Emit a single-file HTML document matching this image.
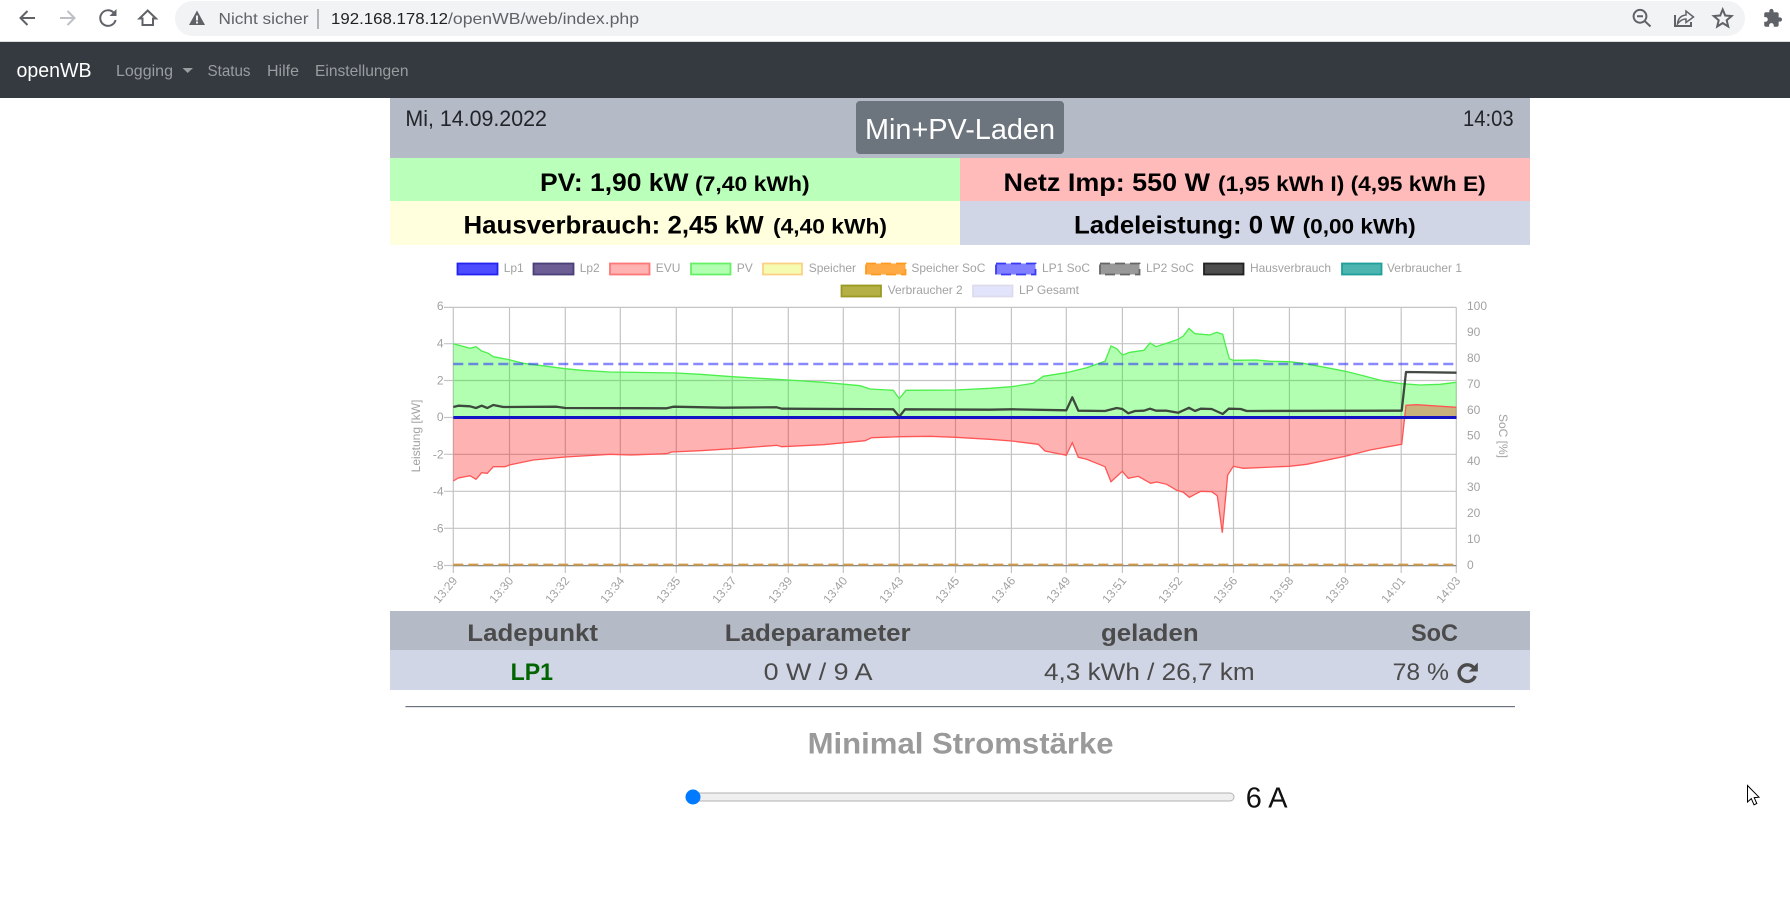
<!DOCTYPE html>
<html lang="de">
<head>
<meta charset="utf-8">
<title>openWB</title>
<style>
html,body{margin:0;padding:0;width:1790px;height:903px;overflow:hidden;background:#fff}
svg{position:absolute;left:0;top:0;display:block}
text{font-family:"Liberation Sans",Arial,sans-serif;white-space:pre}
.nav{font-size:16px;fill:#9a9da0}
.t{font-size:12px;fill:#a2a2a2}
.b{font-weight:bold;fill:#000}
.h{font-weight:bold;font-size:24px;fill:#4b4b4b}
.r{font-size:24px;fill:#4b4b4b}
</style>
</head>
<body>
<svg width="1790" height="903" viewBox="0 0 1790 903" xmlns="http://www.w3.org/2000/svg">
<!-- browser toolbar -->
<rect x="0" y="41" width="1790" height="1" fill="#dadce0"/>
<rect x="175" y="1" width="1570" height="35" rx="17.5" fill="#f1f3f4"/>
<g fill="none" stroke="#5f6368" stroke-width="2">
<path d="M35 18H21M27.5 11L20.5 18L27.5 25"/>
<path stroke="#bdc1c6" d="M60 18H74M67.5 11L74.5 18L67.5 25"/>
<path d="M113.5 12.5A7.8 7.8 0 1 0 115.6 20"/>
<path d="M147.7 10.5L139.5 18.5H142.5V25H153V18.5H156Z"/>
<circle cx="1640" cy="16.3" r="6.4"/>
<path d="M1637 16.3H1643M1645 21.3L1650.5 26.5"/>
<path d="M1675 15V26H1691V22"/>
<path stroke-width="1.5" d="M1677.5 24C1678 18.5 1681 15.5 1686 15V11L1693.5 17L1686 22.5V19C1682.5 19 1680 20.5 1677.5 24Z"/>
<path d="M1722.7 9.5L1725.2 15.5L1731.6 16L1726.7 20.2L1728.2 26.5L1722.7 23.1L1717.2 26.5L1718.7 20.2L1713.8 16L1720.2 15.5Z"/>
</g>
<path d="M116.5 9V16H109.5Z" fill="#5f6368"/>
<path d="M197 10.5L189 25H205Z" fill="#5f6368"/>
<rect x="196" y="15.5" width="2" height="5" fill="#f1f3f4"/><rect x="196" y="21.5" width="2" height="2" fill="#f1f3f4"/>
<path transform="translate(1762.5 8) scale(.85)" fill="#5f6368" d="M20.5 11H19V7c0-1.1-.9-2-2-2h-4V3.5C13 2.12 11.88 1 10.5 1S8 2.12 8 3.5V5H4c-1.1 0-1.99.9-1.99 2v3.8H3.5c1.49 0 2.7 1.21 2.7 2.7s-1.21 2.7-2.7 2.7H2V20c0 1.1.9 2 2 2h3.8v-1.5c0-1.49 1.21-2.7 2.7-2.7 1.49 0 2.7 1.21 2.7 2.7V22H17c1.1 0 2-.9 2-2v-4h1.5c1.38 0 2.5-1.12 2.5-2.5S21.88 11 20.5 11z"/>
<text x="218.5" y="24" font-size="16" fill="#5f6368" textLength="90" lengthAdjust="spacingAndGlyphs">Nicht sicher</text>
<rect x="317.5" y="9" width="1" height="20" fill="#70757a"/>
<text x="331" y="24" font-size="16" fill="#202124" textLength="117" lengthAdjust="spacingAndGlyphs">192.168.178.12</text>
<text x="448" y="24" font-size="16" fill="#5f6368" textLength="191" lengthAdjust="spacingAndGlyphs">/openWB/web/index.php</text>

<!-- navbar -->
<rect x="0" y="42" width="1790" height="56" fill="#343a40"/>
<text x="16.5" y="77" font-size="20" fill="#fff" textLength="75" lengthAdjust="spacingAndGlyphs">openWB</text>
<text class="nav" x="116" y="76" textLength="57" lengthAdjust="spacingAndGlyphs">Logging</text>
<path d="M182.5 68H193L187.7 73Z" fill="#9a9da0"/>
<text class="nav" x="207.5" y="76" textLength="43" lengthAdjust="spacingAndGlyphs">Status</text>
<text class="nav" x="267" y="76" textLength="32" lengthAdjust="spacingAndGlyphs">Hilfe</text>
<text class="nav" x="315" y="76" textLength="93.5" lengthAdjust="spacingAndGlyphs">Einstellungen</text>

<!-- header -->
<rect x="390" y="98" width="1140" height="60" fill="#b5bac7"/>
<text x="405.4" y="126" font-size="22" fill="#212529" textLength="141.5" lengthAdjust="spacingAndGlyphs">Mi, 14.09.2022</text>
<text x="1463" y="126" font-size="22" fill="#212529" textLength="50.7" lengthAdjust="spacingAndGlyphs">14:03</text>
<rect x="856" y="101" width="208" height="53" rx="4" fill="#6c757d"/>
<text x="865" y="139" font-size="29" fill="#fff" textLength="190" lengthAdjust="spacingAndGlyphs">Min+PV-Laden</text>

<!-- power tiles -->
<rect x="390" y="158" width="570" height="43" fill="#baffba"/>
<rect x="960" y="158" width="570" height="43" fill="#ffbaba"/>
<rect x="390" y="201" width="570" height="44" fill="#ffffdd"/>
<rect x="960" y="201" width="570" height="44" fill="#d0d6e5"/>
<text class="b" x="540" y="191" font-size="25" textLength="148.5" lengthAdjust="spacingAndGlyphs">PV: 1,90 kW</text>
<text class="b" x="695" y="191" font-size="21" textLength="114.6" lengthAdjust="spacingAndGlyphs">(7,40 kWh)</text>
<text class="b" x="1003.5" y="191" font-size="25" textLength="206.5" lengthAdjust="spacingAndGlyphs">Netz Imp: 550 W</text>
<text class="b" x="1218" y="191" font-size="21" textLength="267.7" lengthAdjust="spacingAndGlyphs">(1,95 kWh I) (4,95 kWh E)</text>
<text class="b" x="463.5" y="233.5" font-size="25" textLength="300.2" lengthAdjust="spacingAndGlyphs">Hausverbrauch: 2,45 kW</text>
<text class="b" x="773" y="233.5" font-size="21" textLength="114" lengthAdjust="spacingAndGlyphs">(4,40 kWh)</text>
<text class="b" x="1074" y="233.5" font-size="25" textLength="220.6" lengthAdjust="spacingAndGlyphs">Ladeleistung: 0 W</text>
<text class="b" x="1302.6" y="233.5" font-size="21" textLength="113.1" lengthAdjust="spacingAndGlyphs">(0,00 kWh)</text>

<!-- legend -->
<g stroke-width="1.8">
<rect x="457.5" y="263.5" width="40" height="11" fill="#4d4dff" stroke="#2323f0"/>
<rect x="533.5" y="263.5" width="40" height="11" fill="#6c5d94" stroke="#4a3f78"/>
<rect x="610" y="263.5" width="39.5" height="11" fill="#ffb2b2" stroke="#f77"/>
<rect x="691" y="263.5" width="39.5" height="11" fill="#b2ffb2" stroke="#66f066"/>
<rect x="763" y="263.5" width="39" height="11" fill="#f6fbb2" stroke="#fbd184"/>
<rect x="866" y="263.5" width="39.5" height="11" fill="#ffaa44" stroke="#ff9a1e" stroke-dasharray="10 5"/>
<rect x="996" y="263.5" width="39.5" height="11" fill="#7f7fff" stroke="#3a3af5" stroke-dasharray="10 5"/>
<rect x="1100" y="263.5" width="39.5" height="11" fill="#999" stroke="#666" stroke-dasharray="10 5"/>
<rect x="1204" y="263.5" width="39.5" height="11" fill="#4d4d4d" stroke="#222"/>
<rect x="1342" y="263.5" width="39.5" height="11" fill="#4db5b0" stroke="#1fa09a"/>
<rect x="841.5" y="285.5" width="39.5" height="11" fill="#b5b045" stroke="#9a9a22"/>
<rect x="973" y="285.5" width="39.5" height="11" fill="#e2e4fb" stroke="#dcdcec"/>
</g>
<g class="t">
<text class="t" x="503.7" y="272">Lp1</text>
<text class="t" x="579.7" y="272">Lp2</text>
<text class="t" x="655.7" y="272">EVU</text>
<text class="t" x="736.7" y="272">PV</text>
<text class="t" x="808.7" y="272">Speicher</text>
<text class="t" x="911.4" y="272" textLength="74" lengthAdjust="spacingAndGlyphs">Speicher SoC</text>
<text class="t" x="1042" y="272" textLength="48" lengthAdjust="spacingAndGlyphs">LP1 SoC</text>
<text class="t" x="1146" y="272" textLength="48" lengthAdjust="spacingAndGlyphs">LP2 SoC</text>
<text class="t" x="1250" y="272" textLength="81" lengthAdjust="spacingAndGlyphs">Hausverbrauch</text>
<text class="t" x="1387" y="272" textLength="75" lengthAdjust="spacingAndGlyphs">Verbraucher 1</text>
<text class="t" x="887.7" y="294" textLength="75" lengthAdjust="spacingAndGlyphs">Verbraucher 2</text>
<text class="t" x="1019" y="294" textLength="60" lengthAdjust="spacingAndGlyphs">LP Gesamt</text>
</g>

<!-- grid -->
<g stroke="#c4c4c4" stroke-width="1.2" fill="none">
<path d="M444 307.4H1456.3M444 343.7H1456.3M444 380.5H1456.3M444 417.5H1456.3M444 454.3H1456.3M444 491.3H1456.3M444 528.3H1456.3M444 565.5H1456.3"/>
<path d="M453.3 307.4V573M509.5 307.4V573M565.3 307.4V573M620.3 307.4V573M676.3 307.4V573M732.3 307.4V573M788.3 307.4V573M843.3 307.4V573M899.3 307.4V573M955.5 307.4V573M1011.4 307.4V573M1066.3 307.4V573M1122.4 307.4V573M1178.4 307.4V573M1233.5 307.4V573M1289.4 307.4V573M1345.3 307.4V573M1401.2 307.4V573M1456.3 307.4V573"/>
</g>

<!-- axis labels -->
<g class="t" text-anchor="end">
<text class="t" x="443.5" y="310">6</text>
<text class="t" x="443.5" y="347.5">4</text>
<text class="t" x="443.5" y="384.5">2</text>
<text class="t" x="443.5" y="421">0</text>
<text class="t" x="443.5" y="458.5">-2</text>
<text class="t" x="443.5" y="495.5">-4</text>
<text class="t" x="443.5" y="532.5">-6</text>
<text class="t" x="443.5" y="569.5">-8</text>
</g>
<g>
<text class="t" x="1467" y="310">100</text>
<text class="t" x="1467" y="336">90</text>
<text class="t" x="1467" y="362">80</text>
<text class="t" x="1467" y="388">70</text>
<text class="t" x="1467" y="414">60</text>
<text class="t" x="1467" y="439.5">50</text>
<text class="t" x="1467" y="465">40</text>
<text class="t" x="1467" y="491">30</text>
<text class="t" x="1467" y="517">20</text>
<text class="t" x="1467" y="543">10</text>
<text class="t" x="1467" y="569">0</text>
</g>
<text class="t" text-anchor="middle" transform="translate(420 436) rotate(-90)">Leistung [kW]</text>
<text class="t" text-anchor="middle" transform="translate(1499 436) rotate(90)">SoC [%]</text>
<g text-anchor="end">
<text class="t" transform="translate(458 581) rotate(-50)">13:29</text>
<text class="t" transform="translate(514 581) rotate(-50)">13:30</text>
<text class="t" transform="translate(570 581) rotate(-50)">13:32</text>
<text class="t" transform="translate(625 581) rotate(-50)">13:34</text>
<text class="t" transform="translate(681 581) rotate(-50)">13:35</text>
<text class="t" transform="translate(737 581) rotate(-50)">13:37</text>
<text class="t" transform="translate(793 581) rotate(-50)">13:39</text>
<text class="t" transform="translate(848 581) rotate(-50)">13:40</text>
<text class="t" transform="translate(904 581) rotate(-50)">13:43</text>
<text class="t" transform="translate(960 581) rotate(-50)">13:45</text>
<text class="t" transform="translate(1016 581) rotate(-50)">13:46</text>
<text class="t" transform="translate(1071 581) rotate(-50)">13:49</text>
<text class="t" transform="translate(1127 581) rotate(-50)">13:51</text>
<text class="t" transform="translate(1183 581) rotate(-50)">13:52</text>
<text class="t" transform="translate(1238 581) rotate(-50)">13:56</text>
<text class="t" transform="translate(1294 581) rotate(-50)">13:58</text>
<text class="t" transform="translate(1350 581) rotate(-50)">13:59</text>
<text class="t" transform="translate(1406 581) rotate(-50)">14:01</text>
<text class="t" transform="translate(1461 581) rotate(-50)">14:03</text>
</g>

<!-- chart data -->
<polygon fill="rgba(0,255,0,.3)" points="453.3,417.5 453.3,343.7 470,348.3 476,346.7 481.7,351 488.3,353.3 493.3,356.7 509.3,359.7 523.3,363.3 546.7,366.3 565.3,368.7 581.7,370.3 610,372 676.3,373 700,374.3 732.3,376.7 788.3,380 823.3,382.3 860,385.7 870,389 893.3,390.3 899.3,398.7 906,390.3 955.7,390 990,388.3 1011.7,386.7 1033.3,383.3 1043.3,376.3 1066.3,372.7 1086.7,367.7 1105,361.3 1111,346 1116.7,348.7 1122.3,355 1130,352.3 1144,350.3 1150,343 1156,346.7 1166.7,343.3 1178.3,339.2 1183.3,336 1189,328.5 1195,333.7 1210,335 1216.7,332.3 1222.7,334.3 1225,343.3 1229.3,358.7 1233.3,360.3 1256.7,360 1270,361.3 1289.3,361.7 1303.3,363.3 1330,368.3 1345.3,371.3 1363.3,375.7 1383.3,381 1401.7,383.7 1420,385 1440,384.3 1456.5,382.3 1456.5,417.5"/>
<polyline fill="none" stroke="#4aef4a" stroke-width="1.3" points="453.3,343.7 470,348.3 476,346.7 481.7,351 488.3,353.3 493.3,356.7 509.3,359.7 523.3,363.3 546.7,366.3 565.3,368.7 581.7,370.3 610,372 676.3,373 700,374.3 732.3,376.7 788.3,380 823.3,382.3 860,385.7 870,389 893.3,390.3 899.3,398.7 906,390.3 955.7,390 990,388.3 1011.7,386.7 1033.3,383.3 1043.3,376.3 1066.3,372.7 1086.7,367.7 1105,361.3 1111,346 1116.7,348.7 1122.3,355 1130,352.3 1144,350.3 1150,343 1156,346.7 1166.7,343.3 1178.3,339.2 1183.3,336 1189,328.5 1195,333.7 1210,335 1216.7,332.3 1222.7,334.3 1225,343.3 1229.3,358.7 1233.3,360.3 1256.7,360 1270,361.3 1289.3,361.7 1303.3,363.3 1330,368.3 1345.3,371.3 1363.3,375.7 1383.3,381 1401.7,383.7 1420,385 1440,384.3 1456.5,382.3"/>
<polygon fill="rgba(255,0,0,.3)" points="453.3,417.5 453.3,481 458.3,478 470,475.7 476,479.3 481.7,472.7 487.3,473.3 493.3,466.7 505,466.7 509.3,465 533.3,460 565.3,457 610,454.3 630,455 666.7,453.7 671.7,452 700,450.7 732.3,448.7 776.7,445.3 781.7,446.7 823.3,444.7 865,440.7 871.7,437.7 900,436.7 930,436.3 955.7,437.3 990,439.3 1011.7,441 1038.3,444.3 1045,451 1066.3,455.3 1072.3,442.7 1078.3,457.3 1086.7,459.3 1105,466.7 1111,481.7 1122.3,471.3 1128.3,478.3 1138.3,476.3 1150.7,483.3 1156.7,482 1166.7,484.3 1176.7,490.3 1183.3,492.2 1189.3,497.3 1200.7,491.3 1211.7,491.7 1217.3,495.7 1222.3,532.7 1227.7,475 1233.3,466.3 1243.3,468.3 1289.3,466.3 1306.7,464.3 1345.3,456.3 1370,450 1401.7,444.3 1406,405.3 1416.7,404.7 1456.5,407.3 1456.5,417.5"/>
<polyline fill="none" stroke="#f55" stroke-width="1.3" points="453.3,481 458.3,478 470,475.7 476,479.3 481.7,472.7 487.3,473.3 493.3,466.7 505,466.7 509.3,465 533.3,460 565.3,457 610,454.3 630,455 666.7,453.7 671.7,452 700,450.7 732.3,448.7 776.7,445.3 781.7,446.7 823.3,444.7 865,440.7 871.7,437.7 900,436.7 930,436.3 955.7,437.3 990,439.3 1011.7,441 1038.3,444.3 1045,451 1066.3,455.3 1072.3,442.7 1078.3,457.3 1086.7,459.3 1105,466.7 1111,481.7 1122.3,471.3 1128.3,478.3 1138.3,476.3 1150.7,483.3 1156.7,482 1166.7,484.3 1176.7,490.3 1183.3,492.2 1189.3,497.3 1200.7,491.3 1211.7,491.7 1217.3,495.7 1222.3,532.7 1227.7,475 1233.3,466.3 1243.3,468.3 1289.3,466.3 1306.7,464.3 1345.3,456.3 1370,450 1401.7,444.3 1406,405.3 1416.7,404.7 1456.5,407.3"/>
<line x1="453.3" y1="364" x2="1456.3" y2="364" stroke="rgba(40,40,255,.55)" stroke-width="2.4" stroke-dasharray="10 5"/>
<line x1="453.3" y1="565.7" x2="1456.3" y2="565.7" stroke="#808080" stroke-width="1.2"/>
<line x1="453.3" y1="564.6" x2="1456.3" y2="564.6" stroke="#d09a48" stroke-width="2" stroke-dasharray="10 5"/>
<polyline fill="none" stroke="#333a33" stroke-opacity=".92" stroke-width="2.3" stroke-linejoin="round" points="453.3,407 458.3,405.7 470,406.3 476,408 481.7,405.7 487.3,408 493.3,405 503.3,407 556.7,406.7 565.3,408 666.7,408.3 673.3,406.7 723,407.7 776.7,407.3 781.7,408.7 893.3,409.3 899.3,416.7 905,409.3 990,409.7 1011.7,409.3 1066.3,410.3 1072.3,397.3 1078.3,410.7 1105,411 1116.7,408 1122.3,409 1128.3,413.3 1135,411 1144,410.7 1150,408.7 1156,410.7 1166.7,410.7 1178.3,412.7 1189,407.8 1195,411 1200.7,408.7 1211.7,409 1222.7,414 1228.7,408.7 1240.7,409 1246.7,411 1401.7,410.7 1406,372 1456.5,372.7"/>
<line x1="453.3" y1="417.5" x2="1456.5" y2="417.5" stroke="#1414c4" stroke-width="3"/>

<!-- table -->
<rect x="390" y="611" width="1140" height="39" fill="#b5bac7"/>
<rect x="390" y="650" width="1140" height="40" fill="#d0d6e5"/>
<text class="h" x="467.3" y="641" textLength="130.7" lengthAdjust="spacingAndGlyphs">Ladepunkt</text>
<text class="h" x="724.8" y="641" textLength="185.8" lengthAdjust="spacingAndGlyphs">Ladeparameter</text>
<text class="h" x="1101" y="641" textLength="97.6" lengthAdjust="spacingAndGlyphs">geladen</text>
<text class="h" x="1411" y="641" textLength="47" lengthAdjust="spacingAndGlyphs">SoC</text>
<text x="510.6" y="680" font-size="24" font-weight="bold" fill="#006400" textLength="42.4" lengthAdjust="spacingAndGlyphs">LP1</text>
<text class="r" x="763.6" y="680" textLength="108.9" lengthAdjust="spacingAndGlyphs">0 W / 9 A</text>
<text class="r" x="1044" y="680" textLength="210.6" lengthAdjust="spacingAndGlyphs">4,3 kWh / 26,7 km</text>
<text class="r" x="1392.7" y="680" textLength="56.3" lengthAdjust="spacingAndGlyphs">78 %</text>
<path d="M1473.5 667.5A8.3 8.3 0 1 0 1475.2 676" fill="none" stroke="#4b4b4b" stroke-width="3.4"/>
<path d="M1477.8 662.5V671.5H1468.8Z" fill="#4b4b4b"/>
<rect x="405.4" y="706" width="1109.6" height="1.2" fill="#6c757d"/>

<!-- slider -->
<text x="807.6" y="753.5" font-size="30" font-weight="bold" fill="#9a9a9a" textLength="306" lengthAdjust="spacingAndGlyphs">Minimal Stromstärke</text>
<rect x="692" y="793" width="542" height="8" rx="4" fill="#efefef" stroke="#b2b2b2"/>
<circle cx="693" cy="797" r="7.5" fill="#007bff"/>
<text x="1245.7" y="807.5" font-size="29" fill="#111" textLength="41.8" lengthAdjust="spacingAndGlyphs">6 A</text>

<!-- cursor -->
<path d="M1747.5 785.5V802L1751.3 798.6L1754 804.8L1756.8 803.5L1754.2 797.6L1759 797.2Z" fill="#fff" stroke="#000" stroke-width="1"/>
</svg>
</body>
</html>
